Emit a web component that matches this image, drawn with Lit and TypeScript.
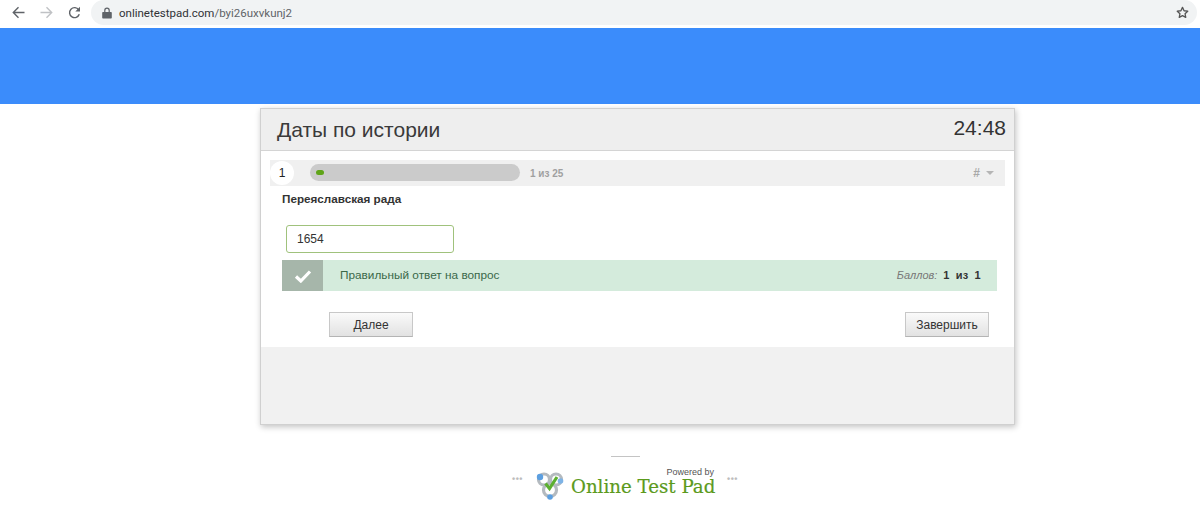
import { LitElement, html, css } from "lit";
import { customElement } from "lit/decorators.js";

@customElement("app-root")
export class AppRoot extends LitElement {
  static styles = css`
    :host { display: block; width: 1200px; height: 514px; overflow: hidden; background: #fff; font-family: "Liberation Sans", Arial, sans-serif; color: #333; }
    * { box-sizing: border-box; }
    .chrome { height: 28px; display: flex; align-items: center; background: #fff; padding-left: 12px; }
    .nav { display: flex; align-items: center; gap: 15px; width: 79px; margin-top: -3px; }
    .nav svg { display: block; flex: none; }
    .omnibox { width: 1106px; height: 25px; margin-top: -3px; background: #f1f3f4; border-radius: 13px; display: flex; align-items: center; padding: 0 8px 0 11px; font: 11.5px "Roboto", "Open Sans", sans-serif; color: #5f6368; }
    .omnibox b { font-weight: 400; color: #303236; }
    .omnibox .url { margin-left: 7px; flex: 1; }
    .banner { height: 76px; background: #3b8cfb; }
    .card { margin: 4px 0 0 260px; width: 755px; height: 317px; border: 1px solid #d0d0d0; box-shadow: 1px 2px 6px rgba(0,0,0,.24); background: #fff; display: flex; flex-direction: column; }
    .head { height: 42px; background: #eeeeee; border-bottom: 1px solid #d4d4d4; display: flex; justify-content: space-between; padding: 0 8px 0 16px; align-items: center; }
    .title { font-size: 21px; color: #3a3a3a; margin-top: 1px; }
    .timer { font-size: 21px; color: #333; margin-top: -3px; }
    .body { height: 196px; padding: 9px 9px 0 9px; display: flex; flex-direction: column; }
    .prog { height: 26px; background: #f0f0f0; display: flex; align-items: center; }
    .num { width: 24px; height: 24px; border-radius: 50%; background: #fff; font-size: 12px; color: #222; display: flex; align-items: center; justify-content: center; flex: none; }
    .bar { margin: 0 0 1px 16px; width: 210px; height: 17px; border-radius: 9px; background: #cbcbcb; padding: 6px; flex: none; }
    .bar i { display: block; width: 8px; height: 5px; border-radius: 3px; background: #5fa418; }
    .count { margin-left: 10px; font-size: 10px; font-weight: 700; color: #a0a0a0; flex: 1; }
    .hash { font-size: 12px; color: #a8a8a8; font-weight: 700; }
    .caret { width: 0; height: 0; border: 4px solid transparent; border-top-color: #b5b5b5; border-bottom: 0; margin: 0 11px 0 6px; }
    .q { margin: 6px 0 0 12px; font-size: 11.7px; font-weight: 700; color: #333; line-height: 14px; }
    .input { margin: 19px 0 0 16px; width: 168px; height: 28px; border: 1px solid #a0c27c; border-radius: 3px; font-size: 12px; padding: 0 10px 1px; display: flex; align-items: center; color: #333; }
    .result { margin: 7px 8px 0 12px; height: 31px; background: #d4ebdc; display: flex; align-items: center; }
    .tick { width: 41px; height: 31px; background: #a6b6aa; display: flex; align-items: center; justify-content: center; flex: none; }
    .msg { margin: 0 0 2px 17px; font-size: 11.8px; color: #3a6849; flex: 1; }
    .score { font-size: 11px; color: #777; font-style: italic; margin: 0 16px 2px 0; display: flex; gap: 6px; align-items: baseline; }
    .score b { font-style: normal; color: #333; font-size: 11px; letter-spacing: .3px; }
    .actions { margin: 21px 16px 0 59px; display: flex; justify-content: space-between; }
    .btn { height: 25px; border: 1px solid #c8c8c8; border-bottom-color: #b4b4b4; background: linear-gradient(#fafafa, #e2e2e2); font-size: 12px; color: #333; display: flex; align-items: center; justify-content: center; }
    .b1, .b2 { width: 84px; }
    .foot { flex: 1; background: #f1f1f1; }
    .brand { position: relative; height: 90px; }
    .rule { position: absolute; left: 611px; top: 31px; width: 29px; height: 1px; background: #c4c4c4; }
    .dots { position: absolute; top: 48px; font-size: 9px; letter-spacing: .5px; color: #bdbdbd; font-weight: 700; line-height: 12px; }
    .d1 { left: 512px; }
    .d2 { left: 727px; }
    .logo { position: absolute; left: 536px; top: 46px; }
    .powered { position: absolute; left: 620px; width: 94px; text-align: right; top: 41px; font-size: 9px; color: #555; line-height: 12px; }
    .name { position: absolute; left: 571px; top: 50px; font: 18.2px/24px "DejaVu Serif", serif; color: #5b9a1c; white-space: nowrap; -webkit-text-stroke: .2px #5b9a1c; }
  `;

  render() {
    return html`
      <div class="chrome">
        <div class="nav">
          <svg width="13" height="13" viewBox="0 0 13 13"><path d="M12.500 6.500H1.500M6.500 1.300 1.300 6.500l5.200 5.200" fill="none" stroke="#5f6368" stroke-width="1.400"/></svg>
          <svg width="13" height="13" viewBox="0 0 13 13"><path d="M.5 6.500h11M6.500 1.300l5.200 5.200-5.200 5.200" fill="none" stroke="#c0c2c5" stroke-width="1.400"/></svg>
          <svg width="13" height="13" viewBox="0 0 13 13"><path d="M11.300 8.300a5 5 0 1 1-.6-4.500" fill="none" stroke="#5f6368" stroke-width="1.400"/><path d="M12 .8v4.700H7.300z" fill="#5f6368"/></svg>
        </div>
        <div class="omnibox">
          <svg width="10" height="12" viewBox="0 0 10 12"><path d="M1 5h8a.8.8 0 0 1 .8.8v5a.8.8 0 0 1-.8.8H1a.8.8 0 0 1-.8-.8v-5A.8.8 0 0 1 1 5z" fill="#5f6368"/><path d="M2.800 5V3.400a2.200 2.200 0 0 1 4.400 0V5" fill="none" stroke="#5f6368" stroke-width="1.200"/></svg>
          <span class="url"><b>onlinetestpad.com</b>/byi26uxvkunj2</span>
          <svg width="13" height="13" viewBox="0 0 24 24"><path d="M12 2.500l2.900 6.300 6.800.8-5 4.700 1.300 6.800L12 17.700 6 21.100l1.300-6.800-5-4.700 6.800-.8z" fill="none" stroke="#555" stroke-width="2.400" stroke-linejoin="round"/></svg>
        </div>
      </div>
      <div class="banner"></div>
      <div class="card">
        <div class="head"><div class="title">Даты по истории</div><div class="timer">24:48</div></div>
        <div class="body">
          <div class="prog">
            <div class="num">1</div>
            <div class="bar"><i></i></div>
            <div class="count">1 из 25</div>
            <div class="hash">#</div>
            <div class="caret"></div>
          </div>
          <div class="q">Переяславская рада</div>
          <div class="input">1654</div>
          <div class="result">
            <div class="tick"><svg width="18" height="14" viewBox="0 0 18 14"><path d="M2 7.500 6.800 12 16 2.500" fill="none" stroke="#fff" stroke-width="3.200"/></svg></div>
            <div class="msg">Правильный ответ на вопрос</div>
            <div class="score">Баллов: <b>1</b> <b>из</b> <b>1</b></div>
          </div>
          <div class="actions">
            <div class="btn b1">Далее</div>
            <div class="btn b2">Завершить</div>
          </div>
        </div>
        <div class="foot"></div>
      </div>
      <div class="brand">
        <div class="rule"></div>
        <div class="dots d1">•••</div>
        <svg class="logo" width="28" height="30" viewBox="0 0 28 30">
          <g fill="none" stroke="#b4babf" stroke-width="3.200"><circle cx="8" cy="8.500" r="5.500"/><circle cx="20" cy="8.500" r="5.500"/><circle cx="14" cy="19" r="6.500"/></g>
          <circle cx="4" cy="6" r="3.200" fill="#5c9fe0"/><circle cx="24.500" cy="10" r="2.800" fill="#7db3e6"/><circle cx="14" cy="26" r="2.800" fill="#5c9fe0"/>
          <path d="M9.500 12.500l4 5 7.500-11.500" fill="none" stroke="#5cb030" stroke-width="3.200"/>
        </svg>
        <div class="powered">Powered by</div>
        <div class="name">Online Test Pad</div>
        <div class="dots d2">•••</div>
      </div>
    `;
  }
}
